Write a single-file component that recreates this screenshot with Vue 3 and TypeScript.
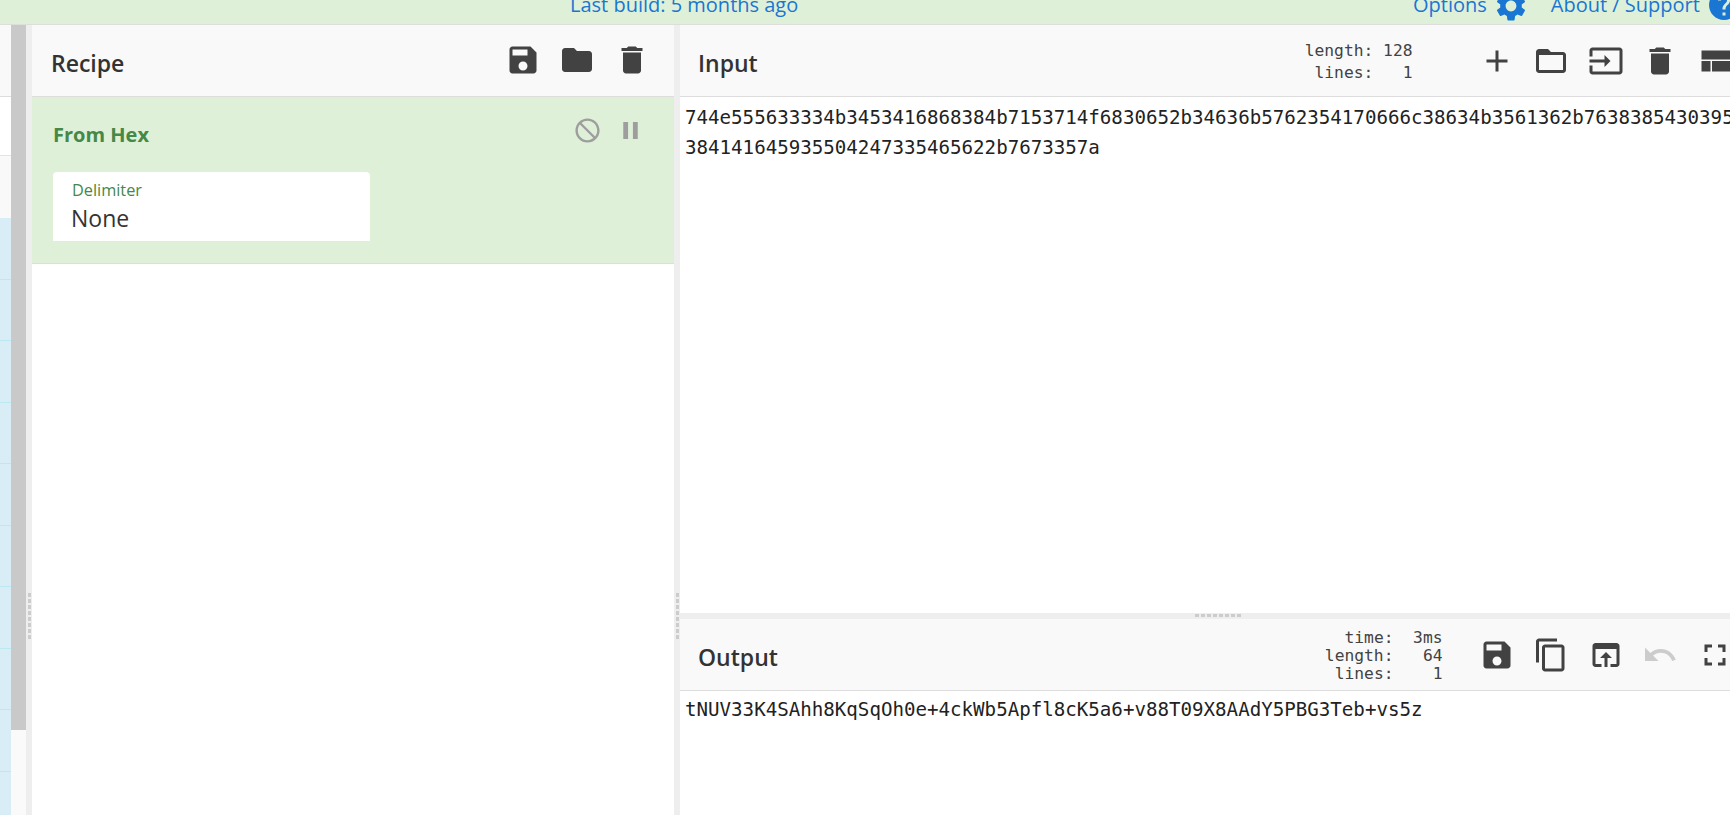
<script setup lang="ts">
const icons: Record<string, string> = {
  save: 'M17 3H5c-1.11 0-2 .9-2 2v14c0 1.1.89 2 2 2h14c1.1 0 2-.9 2-2V7l-4-4zm-5 16c-1.66 0-3-1.34-3-3s1.34-3 3-3 3 1.34 3 3-1.34 3-3 3zm3-10H5V5h10v4z',
  folder: 'M10 4H4c-1.1 0-1.99.9-1.99 2L2 18c0 1.1.9 2 2 2h16c1.1 0 2-.9 2-2V8c0-1.1-.9-2-2-2h-8l-2-2z',
  del: 'M6 19c0 1.1.9 2 2 2h8c1.1 0 2-.9 2-2V7H6v12zM19 4h-3.5l-1-1h-5l-1 1H5v2h14V4z',
  add: 'M19 13h-6v6h-2v-6H5v-2h6V5h2v6h6v2z',
  open: 'M20 6h-8l-2-2H4c-1.1 0-1.99.9-1.99 2L2 18c0 1.1.9 2 2 2h16c1.1 0 2-.9 2-2V8c0-1.1-.9-2-2-2zm0 12H4V8h16v10z',
  input: 'M21 3.01H3c-1.1 0-2 .9-2 2V9h2V4.99h18v14.03H3V15H1v4.01c0 1.1.9 1.98 2 1.98h18c1.1 0 2-.88 2-1.98v-14c0-1.11-.9-2-2-2zM11 16l4-4-4-4v3H1v2h10v3z',
  compact: 'M3 19h6v-7H3v7zm7 0h12v-7H10v7zM3 5v6h19V5H3z',
  copy: 'M16 1H4c-1.1 0-2 .9-2 2v14h2V3h12V1zm3 4H8c-1.1 0-2 .9-2 2v14c0 1.1.9 2 2 2h11c1.1 0 2-.9 2-2V7c0-1.1-.9-2-2-2zm0 16H8V7h11v14z',
  browser: 'M19 4H5c-1.11 0-2 .9-2 2v12c0 1.1.89 2 2 2h4v-2H5V8h14v10h-4v2h4c1.1 0 2-.9 2-2V6c0-1.1-.9-2-2-2zm-7 6l-4 4h3v6h2v-6h3l-4-4z',
  undo: 'M12.5 8c-2.65 0-5.05.99-6.9 2.6L2 7v9h9l-3.62-3.62c1.39-1.16 3.16-1.88 5.12-1.88 3.54 0 6.55 2.31 7.6 5.5l2.37-.78C21.08 11.03 17.15 8 12.5 8z',
  full: 'M7 14H5v5h5v-2H7v-3zm-2-4h2V7h3V5H5v5zm12 7h-3v2h5v-5h-2v3zM14 5v2h3v3h2V5h-5z',
  block: 'M12 2C6.48 2 2 6.48 2 12s4.48 10 10 10 10-4.48 10-10S17.52 2 12 2zM4 12c0-4.42 3.58-8 8-8 1.85 0 3.55.63 4.9 1.69L5.69 16.9C4.63 15.55 4 13.85 4 12zm8 8c-1.85 0-3.55-.63-4.9-1.69L18.31 7.1C19.37 8.45 20 10.15 20 12c0 4.42-3.58 8-8 8z',
  pause: 'M6 19h4V5H6v14zm8-14v14h4V5h-4z',
  gear: 'M19.14 12.94c.04-.3.06-.61.06-.94 0-.32-.02-.64-.07-.94l2.03-1.58c.18-.14.23-.41.12-.61l-1.92-3.32c-.12-.22-.37-.29-.59-.22l-2.39.96c-.5-.38-1.03-.7-1.62-.94l-.36-2.54c-.04-.24-.24-.41-.48-.41h-3.84c-.24 0-.43.17-.47.41l-.36 2.54c-.59.24-1.13.57-1.62.94l-2.39-.96c-.22-.08-.47 0-.59.22L2.74 8.87c-.12.21-.08.47.12.61l2.03 1.58c-.05.3-.09.63-.09.94s.02.64.07.94l-2.03 1.58c-.18.14-.23.41-.12.61l1.92 3.32c.12.22.37.29.59.22l2.39-.96c.5.38 1.03.7 1.62.94l.36 2.54c.05.24.24.41.48.41h3.84c.24 0 .44-.17.47-.41l.36-2.54c.59-.24 1.13-.56 1.62-.94l2.39.96c.22.08.47 0 .59-.22l1.92-3.32c.12-.22.07-.47-.12-.61l-2.01-1.58zM12 15.6c-1.98 0-3.6-1.62-3.6-3.6s1.62-3.6 3.6-3.6 3.6 1.62 3.6 3.6-1.62 3.6-3.6 3.6z',
  help: 'M12 2C6.48 2 2 6.48 2 12s4.48 10 10 10 10-4.48 10-10S17.52 2 12 2zm1 17h-2v-2h2v2zm2.07-7.75l-.9.92C13.45 12.9 13 13.5 13 15h-2v-.5c0-1.1.45-2.1 1.17-2.83l1.24-1.26c.37-.36.59-.86.59-1.41 0-1.1-.9-2-2-2s-2 .9-2 2H8c0-2.21 1.79-4 4-4s4 1.79 4 4c0 .88-.36 1.68-.93 2.25z',
}
const recipeButtons = ['save', 'folder', 'del']
const inputButtons = ['add', 'open', 'input', 'del', 'compact']
const outputButtons = ['save', 'copy', 'browser', 'undo', 'full']
const inputInfo = ['length: 128', 'lines:   1']
const outputInfo = ['time:  3ms', 'length:   64', 'lines:    1']
const blueRows = Array.from({ length: 10 }, (_, i) => i)
const line1 = '744e555633334b3453416868384b7153714f6830652b34636b5762354170666c38634b3561362b76383854303958'
const line2 = '384141645935504247335465622b7673357a'
const output = 'tNUV33K4SAhh8KqSqOh0e+4ckWb5Apfl8cK5a6+v88T09X8AAdY5PBG3Teb+vs5z'
</script>

<template>
  <div class="page">
    <header class="banner">
      <a class="build">Last build: 5 months ago</a>
      <div class="links">
        <a>Options</a>
        <svg class="top-icon gear" viewBox="0 0 24 24"><path :d="icons.gear" /></svg>
        <a class="about">About / Support</a>
        <svg class="top-icon help" viewBox="0 0 24 24"><path :d="icons.help" /></svg>
      </div>
    </header>

    <main class="workspace">
      <div class="stub">
        <div class="stub-head"></div>
        <div class="stub-white"></div>
        <div class="stub-grey"></div>
        <div v-for="r in blueRows" :key="r" class="stub-blue"></div>
      </div>
      <div class="scrollbar">
        <div class="thumb"></div>
      </div>
      <div class="gutter"><span class="dots"></span></div>

      <section class="recipe">
        <div class="head">
          <h2 class="title">Recipe</h2>
          <div class="buttons">
            <span v-for="b in recipeButtons" :key="b" class="btn">
              <svg viewBox="0 0 24 24"><path :d="icons[b]" /></svg>
            </span>
          </div>
        </div>
        <div class="op">
          <div class="op-top">
            <span class="op-name">From Hex</span>
            <div class="op-icons">
              <svg class="mirror" viewBox="0 0 24 24"><path :d="icons.block" /></svg>
              <svg viewBox="0 0 24 24"><path :d="icons.pause" /></svg>
            </div>
          </div>
          <div class="field">
            <div class="field-label">Delimiter</div>
            <div class="field-value">None</div>
          </div>
        </div>
      </section>

      <div class="gutter"><span class="dots"></span></div>

      <section class="io">
        <div class="input-pane">
          <div class="head">
            <h2 class="title title-io">Input</h2>
            <div class="head-right">
              <div class="info info-input">
                <div v-for="l in inputInfo" :key="l">{{ l }}</div>
              </div>
              <div class="buttons">
                <span v-for="b in inputButtons" :key="b" class="btn">
                  <svg viewBox="0 0 24 24"><path :d="icons[b]" /></svg>
                </span>
              </div>
            </div>
          </div>
          <div class="text input-text">
            <div>{{ line1 }}</div>
            <div>{{ line2 }}</div>
          </div>
        </div>
        <div class="hgutter"><span class="hdots"></span></div>
        <div class="output-pane">
          <div class="head">
            <h2 class="title title-io">Output</h2>
            <div class="head-right">
              <div class="info info-output">
                <div v-for="l in outputInfo" :key="l">{{ l }}</div>
              </div>
              <div class="buttons">
                <span v-for="b in outputButtons" :key="b" class="btn" :class="{ off: b === 'undo' }">
                  <svg viewBox="0 0 24 24"><path :d="icons[b]" /></svg>
                </span>
              </div>
            </div>
          </div>
          <div class="text output-text">{{ output }}</div>
        </div>
      </section>
    </main>
  </div>
</template>

<style>
html, body { margin: 0; overflow: hidden; background: #fff; }
</style>

<style scoped>
.page { width: 1730px; height: 815px; overflow: hidden; display: flex; flex-direction: column; font-family: "Open Sans", "Noto Sans", sans-serif; color: #333; }
.banner { flex: 0 0 25px; box-sizing: border-box; height: 25px; background: #dff0d8; border-bottom: 1px solid #ddd; display: flex; align-items: flex-start; overflow: hidden; color: #1976d2; font-size: 20px; line-height: 28px; }
.build { margin-left: 570px; margin-top: -9px; }
.links { margin-left: auto; display: flex; align-items: flex-start; width: 317px; flex: none; margin-top: -9px; }
.top-icon { width: 36px; height: 36px; fill: #1976d2; flex: none; }
.gear { margin-left: 6px; margin-right: 22px; margin-top: -3px; }
.about { white-space: nowrap; }
.help { margin-left: 6px; margin-top: -4px; }

.workspace { flex: 1; display: flex; min-height: 0; }
.stub { width: 11px; flex: none; display: flex; flex-direction: column; overflow: hidden; }
.stub-head { height: 71px; background: #f9f9f9; border-bottom: 1px solid #ddd; flex: none; }
.stub-white { height: 58px; background: #fff; border-bottom: 1px solid #e4e4e4; flex: none; }
.stub-grey { height: 62px; background: #f9f9f9; flex: none; }
.stub-blue { height: 60.5px; background: #d9edf7; border-bottom: 1px solid #bce8f1; flex: none; }
.scrollbar { width: 15px; flex: none; background: #fafafa; }
.thumb { height: 705px; background: #c9c9c9; }
.gutter { width: 6px; flex: none; background: #eee; position: relative; }
.dots { position: absolute; left: 1.5px; top: 568px; width: 3px; height: 46px; background: repeating-linear-gradient(to bottom, #ccc 0 4px, transparent 4px 6px); }

.recipe { width: 642px; flex: none; display: flex; flex-direction: column; background: #fff; }
.head { height: 72px; box-sizing: border-box; flex: none; background: #f9f9f9; border-bottom: 1px solid #ddd; display: flex; align-items: center; justify-content: space-between; padding-left: 19px; }
.title { margin: 5px 0 0; font-size: 23px; font-weight: 600; color: #333; }
.title-io { margin-left: -1px; }
.buttons { display: flex; align-items: center; }
.recipe .buttons { padding-right: 15px; margin-top: -2px; }
.btn { width: 54.5px; height: 36px; display: flex; justify-content: center; flex: none; }
.btn svg { width: 36px; height: 36px; fill: #424242; }
.btn.off svg { fill: #ccc; }
.op { height: 167px; flex: none; box-sizing: border-box; background: #dff0d8; border-bottom: 1px solid #d3e5cb; padding: 24px 0 0 21px; display: flex; flex-direction: column; }
.op-top { display: flex; justify-content: space-between; height: 51px; }
.op-name { font-size: 20px; font-weight: 700; color: #468847; line-height: 28px; }
.op-icons { display: flex; gap: 14px; padding-right: 29px; margin-top: -5px; }
.op-icons svg { width: 29px; height: 29px; fill: #9e9e9e; }
.mirror { transform: scaleX(-1); margin-left: 1px; }
.field { width: 317px; height: 69px; background: #fff; border-radius: 4px 4px 0 0; padding: 8px 0 0 19px; box-sizing: border-box; }
.field-label { font-size: 16.3px; line-height: 20px; color: #468847; font-weight: 400; }
.field-value { font-size: 23px; line-height: 30px; color: #333; margin-top: 3px; margin-left: -1px; }

.io { width: 1062px; flex: none; display: flex; flex-direction: column; }
.input-pane { height: 588px; flex: none; }
.output-pane { flex: 1; }
.hgutter { height: 6px; flex: none; background: #eee; display: flex; align-items: flex-start; }
.hdots { margin-left: 515px; margin-top: 1px; width: 46px; height: 3px; background: repeating-linear-gradient(to right, #ccc 0 4px, transparent 4px 6px); }
.head-right { display: flex; align-items: center; }
.info { font-family: "DejaVu Sans Mono", monospace; font-size: 16.3px; white-space: pre; color: #424242; text-align: right; }
.info-input { line-height: 22px; margin-right: 57px; margin-top: 2px; }
.info-output { line-height: 18px; margin-right: 27px; margin-top: 2px; }
.text { font-family: "DejaVu Sans Mono", monospace; font-size: 19.15px; color: #222; white-space: nowrap; overflow: hidden; padding-left: 5px; line-height: 30px; }
.input-text { padding-top: 6px; }
.output-text { padding-top: 4px; }
</style>
